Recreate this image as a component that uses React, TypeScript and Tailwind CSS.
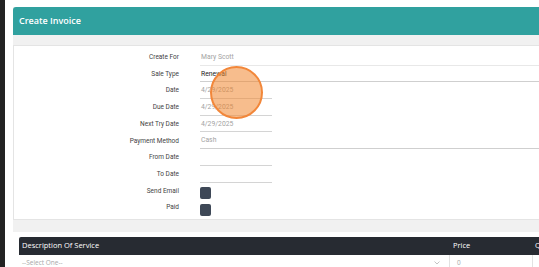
import React from 'react';

type Row = {
  label: string;
  value?: string;
  kind: 'text' | 'select' | 'short' | 'check';
  dark?: boolean;
  line?: string;
};

const rows: Row[] = [
  { label: 'Create For', value: 'Mary Scott', kind: 'text', line: 'border-[#e8e8e8]' },
  { label: 'Sale Type', value: 'Renewal', kind: 'select', dark: true, line: 'border-[#cfcfcf]' },
  { label: 'Date', value: '4/29/2025', kind: 'short' },
  { label: 'Due Date', value: '4/29/2025', kind: 'short' },
  { label: 'Next Try Date', value: '4/29/2025', kind: 'short' },
  { label: 'Payment Method', value: 'Cash', kind: 'select', line: 'border-[#cfcfcf]' },
  { label: 'From Date', kind: 'short' },
  { label: 'To Date', kind: 'short' },
  { label: 'Send Email', kind: 'check' },
  { label: 'Paid', kind: 'check' },
];

function FormRow({ row }: { row: Row }) {
  return (
    <div className="flex h-[16.7px] items-center">
      <div className="w-[165px] text-right text-[6.5px] leading-none text-[#444]">{row.label}</div>
      <div className="ml-[21px] flex h-full flex-1 items-center">
        {row.kind === 'check' ? (
          <div className="mt-[4px] h-[12px] w-[11px] rounded-[2px] bg-[#3e4857]" />
        ) : (
          <div
            className={`flex h-full items-center border-b pt-[1px] text-[6.8px] leading-none ${
              row.kind === 'short' ? 'w-[72px] border-[#d4d4d4]' : `flex-1 ${row.line}`
            } ${row.dark ? 'text-[#222]' : 'text-[#a3a3a3]'}`}
          >
            <span className="pl-[1px]">{row.value}</span>
          </div>
        )}
      </div>
    </div>
  );
}

export default function App() {
  return (
    <div className="flex h-[267px] w-[539px] overflow-hidden bg-white" style={{ fontFamily: 'Roboto, "Liberation Sans", sans-serif' }}>
      <div className="w-[5px] shrink-0 bg-[#222222]" />
      <div className="shrink-0 pl-[8px] pt-[7px]">
        <div className="flex w-[620px] flex-col bg-[#f1f1f1]">
          <div
            className="flex h-[28px] items-center rounded-tl-[3px] bg-[#30a19f] px-[6px] text-[9px] font-semibold text-white"
            style={{ fontFamily: '"Open Sans", sans-serif' }}
          >
            Create Invoice
          </div>

          <div className="relative mt-[10px] h-[175px] border border-[#e4e4e4] bg-white pt-[3px]">
            {rows.map((r) => (
              <FormRow key={r.label} row={r} />
            ))}
            <div className="absolute left-[196px] top-[20px] h-[53px] w-[53px] rounded-full border-2 border-[#f2873a] bg-[#f0872f]/55" />
          </div>

          <div className="mt-[12px] h-[40px] bg-white px-[6px] pt-[5px]" style={{ fontFamily: '"Open Sans", sans-serif' }}>
            <div className="flex h-[18px] items-center rounded-tl-[2px] bg-[#272b32] text-[7.5px] text-white">
              <div className="w-[431px] pl-[3px]">Description Of Service</div>
              <div className="w-[83px] pl-[3px]">Price</div>
              <div className="flex-1 pl-[2px]">Quantity</div>
            </div>
            <div className="flex h-[16px] text-[6.5px] text-[#a8a8a8]">
              <div className="flex w-[431px] items-center justify-between border-r border-[#e2e2e2] pl-[3px] pr-[9px]">
                <span>--Select One--</span>
                <svg width="6" height="4" viewBox="0 0 6 4" fill="none">
                  <path d="M0.5 0.5L3 3L5.5 0.5" stroke="#b5b5b5" strokeWidth="0.8" />
                </svg>
              </div>
              <div className="flex w-[83px] items-center border-r border-[#e2e2e2] pl-[7px]">0</div>
              <div className="flex-1" />
            </div>
          </div>
        </div>
      </div>
    </div>
  );
}
